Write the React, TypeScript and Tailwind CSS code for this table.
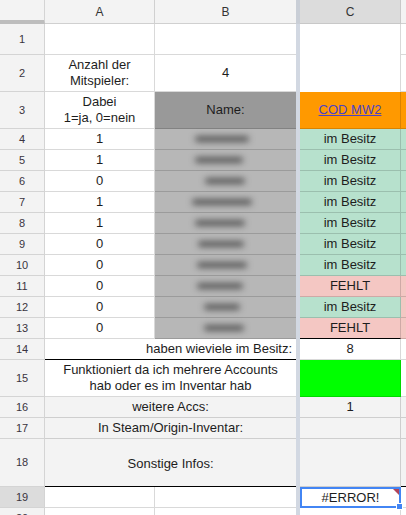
import React from "react"

// Spreadsheet screenshot: player list with ownership status
const font = "font-['Liberation_Sans',Arial,sans-serif]"
const line = "border-black/15"

const players = [
  { a: "1", c: "ok", d: "ok", blur: 54, off: 0 },
  { a: "1", c: "ok", d: "ok", blur: 48, off: -6 },
  { a: "0", c: "ok", d: "ok", blur: 40, off: 6 },
  { a: "1", c: "ok", d: "ok", blur: 60, off: 0 },
  { a: "1", c: "ok", d: "ok", blur: 50, off: -4 },
  { a: "0", c: "ok", d: "ok", blur: 46, off: -2 },
  { a: "0", c: "ok", d: "ok", blur: 50, off: 0 },
  { a: "0", c: "miss", d: "miss", blur: 46, off: -4 },
  { a: "0", c: "ok", d: "miss", blur: 36, off: 0 },
  { a: "0", c: "miss", d: "miss", blur: 40, off: 4 },
]

function RowHead({ n, active = false }: { n: number; active?: boolean }) {
  return (
    <div
      className={
        "w-[45px] shrink-0 flex items-center justify-center border-r border-b border-[#d4d4d4] text-[11px] text-[#3a3340] " +
        (active ? "bg-[#dcdcdc]" : "bg-[#f3f3f3]")
      }
    >
      {n}
    </div>
  )
}

function Divider() {
  return <div className="w-[4px] shrink-0 bg-[#d2d8e2]" />
}

export default function App() {
  return (
    <div className={`${font} w-[406px] h-[515px] overflow-hidden bg-white text-[13px] text-[#1d1d1d]`}>
      {/* column headers */}
      <div className="flex h-[24px]">
        <div className="w-[45px] shrink-0 bg-[#f3f3f3] border-r border-[#d4d4d4] border-b-4 border-b-[#bdbdbd]" />
        <div className="w-[110px] shrink-0 bg-[#f3f3f3] border-r border-b border-[#d0d0d0] flex items-center justify-center text-[12px] text-[#333]">A</div>
        <div className="w-[141px] shrink-0 bg-[#f3f3f3] border-b border-[#d0d0d0] flex items-center justify-center text-[12px] text-[#333]">B</div>
        <div className="w-[4px] shrink-0 bg-[#c9ced6]" />
        <div className="w-[101px] shrink-0 bg-[#dcdcdc] border-r border-b border-[#c8c8c8] flex items-center justify-center text-[12px] text-[#333]">C</div>
        <div className="flex-1 bg-[#f3f3f3] border-b border-[#d0d0d0]" />
      </div>

      {/* row 1 */}
      <div className="flex h-[31px]">
        <RowHead n={1} />
        <div className={`w-[110px] shrink-0 border-r border-b ${line}`} />
        <div className={`w-[141px] shrink-0 border-b ${line}`} />
        <Divider />
        <div className={`w-[101px] shrink-0 border-r ${line}`} />
        <div className={`flex-1 border-b ${line}`} />
      </div>

      {/* row 2 */}
      <div className="flex h-[37px]">
        <RowHead n={2} />
        <div className={`w-[110px] shrink-0 border-r border-b ${line} flex flex-col items-center justify-center leading-[16px]`}>
          <span>Anzahl der</span>
          <span>Mitspieler:</span>
        </div>
        <div className={`w-[141px] shrink-0 border-b ${line} flex items-center justify-center`}>4</div>
        <Divider />
        <div className={`w-[101px] shrink-0 border-r ${line}`} />
        <div className={`flex-1 border-b ${line}`} />
      </div>

      {/* row 3 */}
      <div className="flex h-[37px]">
        <RowHead n={3} />
        <div className={`w-[110px] shrink-0 border-r border-b ${line} flex flex-col items-center justify-center leading-[16px]`}>
          <span>Dabei</span>
          <span>1=ja, 0=nein</span>
        </div>
        <div className={`w-[141px] shrink-0 border-b ${line} bg-[#999999] flex items-center justify-center`}>Name:</div>
        <Divider />
        <div className={`w-[101px] shrink-0 border-r border-b ${line} bg-[#ff9900] flex items-center justify-center`}>
          <span className="text-[#4b43c6] underline">COD MW2</span>
        </div>
        <div className={`flex-1 border-b ${line} bg-[#ff9900]`} />
      </div>

      {/* rows 4-13 */}
      {players.map((p, i) => (
        <div key={i} className="flex h-[21px]">
          <RowHead n={i + 4} />
          <div className={`w-[110px] shrink-0 border-r border-b ${line} flex items-center justify-center`}>{p.a}</div>
          <div className={`w-[141px] shrink-0 border-b ${line} bg-[#b7b7b7] flex items-center justify-center pr-[8px]`}>
            <div
              className="h-[6px] rounded-full bg-[#5a5a5a] blur-[3px]"
              style={{ width: p.blur, marginLeft: p.off }}
            />
          </div>
          <Divider />
          <div
            className={
              `w-[101px] shrink-0 border-r border-b flex items-center justify-center ` +
              (i === 9 ? "border-b-black border-r-black/15 " : "border-black/15 ") +
              (p.c === "ok" ? "bg-[#b7e1cd]" : "bg-[#f4c7c3]")
            }
          >
            {p.c === "ok" ? "im Besitz" : "FEHLT"}
          </div>
          <div className={`flex-1 border-b ${line} ` + (p.d === "ok" ? "bg-[#b7e1cd]" : "bg-[#f4c7c3]")} />
        </div>
      ))}

      {/* row 14 */}
      <div className="flex h-[21px]">
        <RowHead n={14} />
        <div className="w-[251px] shrink-0 border-b border-black flex items-center justify-end pr-[4px]">haben wieviele im Besitz:</div>
        <Divider />
        <div className={`w-[101px] shrink-0 border-r border-b ${line} flex items-center justify-center`}>8</div>
        <div className={`flex-1 border-b ${line}`} />
      </div>

      {/* row 15 */}
      <div className="flex h-[37px]">
        <RowHead n={15} />
        <div className={`w-[251px] shrink-0 border-b ${line} flex flex-col items-center justify-center leading-[16px]`}>
          <span>Funktioniert da ich mehrere Accounts</span>
          <span>hab oder es im Inventar hab</span>
        </div>
        <Divider />
        <div className={`w-[101px] shrink-0 border-r border-b ${line} bg-[#00ff00]`} />
        <div className={`flex-1 border-b ${line}`} />
      </div>

      {/* row 16 */}
      <div className="flex h-[21px] bg-[#f3f3f3]">
        <RowHead n={16} />
        <div className={`w-[251px] shrink-0 border-b ${line} flex items-center justify-center`}>weitere Accs:</div>
        <Divider />
        <div className={`w-[101px] shrink-0 border-r border-b ${line} flex items-center justify-center`}>1</div>
        <div className={`flex-1 border-b ${line}`} />
      </div>

      {/* row 17 */}
      <div className="flex h-[21px] bg-[#f3f3f3]">
        <RowHead n={17} />
        <div className={`w-[251px] shrink-0 border-b ${line} flex items-center justify-center`}>In Steam/Origin-Inventar:</div>
        <Divider />
        <div className={`w-[101px] shrink-0 border-r border-b ${line}`} />
        <div className={`flex-1 border-b ${line}`} />
      </div>

      {/* row 18 */}
      <div className="flex h-[48px] bg-[#f3f3f3]">
        <RowHead n={18} />
        <div className="w-[251px] shrink-0 border-b border-black flex items-center justify-center pt-[2px]">Sonstige Infos:</div>
        <Divider />
        <div className={`w-[101px] shrink-0 border-r border-b ${line}`} />
        <div className="flex-1 border-b border-black" />
      </div>

      {/* row 19 */}
      <div className="flex h-[21px]">
        <RowHead n={19} active />
        <div className={`w-[110px] shrink-0 border-r border-b ${line}`} />
        <div className={`w-[141px] shrink-0 border-b ${line}`} />
        <Divider />
        <div className="relative w-[101px] shrink-0 border-2 border-[#4285f4] flex items-center justify-center">
          #ERROR!
          <div className="absolute top-0 right-0 w-0 h-0 border-l-[6px] border-l-transparent border-t-[6px] border-t-[#b0445a]" />
          <div className="absolute -bottom-[4px] -right-[4px] w-[7px] h-[7px] bg-[#4285f4] border border-white" />
        </div>
        <div className={`flex-1 border-b ${line}`} />
      </div>

      {/* row 20, cut off at the window edge */}
      <div className="flex h-[21px]">
        <RowHead n={20} />
        <div className={`w-[110px] shrink-0 border-r border-b ${line}`} />
        <div className={`w-[141px] shrink-0 border-b ${line}`} />
        <Divider />
        <div className={`w-[101px] shrink-0 border-r border-b ${line}`} />
        <div className={`flex-1 border-b ${line}`} />
      </div>
    </div>
  )
}
